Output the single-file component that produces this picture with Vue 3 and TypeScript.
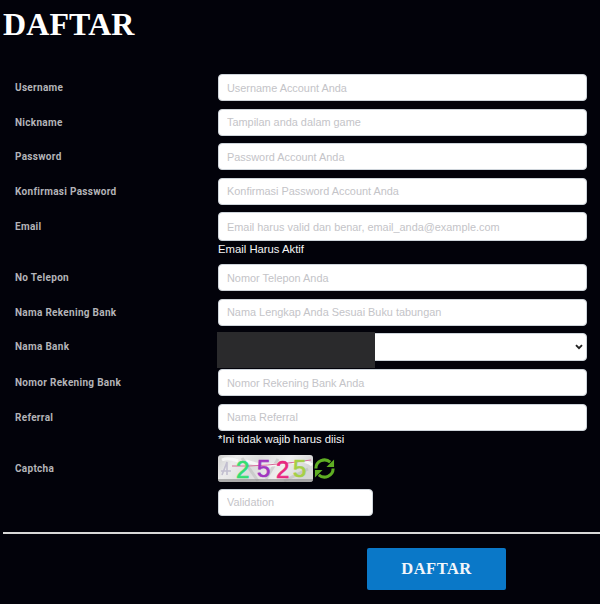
<script setup lang="ts">
interface Row { label: string; ph: string; note?: string }
const rowsA: Row[] = [
  { label: 'Username', ph: 'Username Account Anda' },
  { label: 'Nickname', ph: 'Tampilan anda dalam game' },
  { label: 'Password', ph: 'Password Account Anda' },
  { label: 'Konfirmasi Password', ph: 'Konfirmasi Password Account Anda' },
  { label: 'Email', ph: 'Email harus valid dan benar, email_anda@example.com', note: 'Email Harus Aktif' },
  { label: 'No Telepon', ph: 'Nomor Telepon Anda' },
  { label: 'Nama Rekening Bank', ph: 'Nama Lengkap Anda Sesuai Buku tabungan' },
]
const rowsB: Row[] = [
  { label: 'Nomor Rekening Bank', ph: 'Nomor Rekening Bank Anda' },
  { label: 'Referral', ph: 'Nama Referral', note: '*Ini tidak wajib harus diisi' },
]
</script>

<template>
  <main class="page">
    <h1 class="title">DAFTAR</h1>
    <form class="form" @submit.prevent>
      <div v-for="r in rowsA" :key="r.label" class="row" :class="{ noted: r.note, email: r.label === 'Email' }">
        <label class="label">{{ r.label }}</label>
        <div class="field">
          <input class="input" type="text" :placeholder="r.ph" />
          <p v-if="r.note" class="note">{{ r.note }}</p>
        </div>
      </div>
      <div class="row bank-row">
        <label class="label">Nama Bank</label>
        <div class="field bank">
          <select class="input select"><option></option></select>
          <svg class="chevron" width="8" height="6" viewBox="0 0 8 6" fill="none">
            <path d="M1 1.2l3 3 3-3" stroke="#222" stroke-width="1.9" />
          </svg>
          <div class="redact"></div>
        </div>
      </div>
      <div v-for="r in rowsB" :key="r.label" class="row" :class="{ noted: r.note }">
        <label class="label">{{ r.label }}</label>
        <div class="field">
          <input class="input" type="text" :placeholder="r.ph" />
          <p v-if="r.note" class="note">{{ r.note }}</p>
        </div>
      </div>
      <div class="row captcha-row">
        <label class="label">Captcha</label>
        <div class="field">
          <div class="captcha-line">
            <svg class="captcha" width="95" height="27" viewBox="0 0 95 27">
              <defs>
                <linearGradient id="cg" x1="0" y1="0" x2="1" y2="0.2">
                  <stop offset="0" stop-color="#cfcfcf" />
                  <stop offset="0.2" stop-color="#ececec" />
                  <stop offset="0.45" stop-color="#dcdcdc" />
                  <stop offset="0.75" stop-color="#efefef" />
                  <stop offset="1" stop-color="#d6d6d6" />
                </linearGradient>
                <clipPath id="cc"><rect width="95" height="27" rx="3" /></clipPath>
              </defs>
              <g clip-path="url(#cc)">
                <rect width="95" height="27" fill="url(#cg)" />
                <path d="M24 3 L40 26 M48 24 L60 4 M66 26 L90 14" stroke="#a5a5a5" stroke-width="3" fill="none" opacity=".35" />
                <path d="M4 20 L9 7 L9 20 M3 16 H13" stroke="#c2bfd0" stroke-width="1.6" fill="none" />
                <path d="M28 6 Q50 14 70 7 M4 5 Q10 2 20 6 M74 8 Q85 3 94 10" stroke="#fafafa" stroke-width="3" fill="none" opacity=".9" />
                <rect y="24" width="95" height="3" fill="#8e8e8e" opacity=".65" />
                <path d="M14 11 Q45 12 93 5" stroke="#d76a9a" stroke-width="1" fill="none" />
                <text x="18" y="23" class="d" fill="#35dd72" stroke="#35dd72">2</text>
                <text x="39" y="22" class="d" fill="#a035c0" stroke="#a035c0">5</text>
                <text x="58" y="23" class="d" fill="#e8277f" stroke="#e8277f">2</text>
                <text x="75" y="22" class="d" fill="#a5d045" stroke="#a5d045">5</text>
              </g>
            </svg>
            <svg class="refresh" width="23" height="23" viewBox="0 0 24 24" fill="none">
              <path d="M3 12a9 9 0 0 1 15-6.6" stroke="#5fae23" stroke-width="3.2" />
              <path d="M22 2.5v8h-8z" fill="#5fae23" />
              <path d="M21 12a9 9 0 0 1-15 6.6" stroke="#5fae23" stroke-width="3.2" />
              <path d="M2 21.5v-8h8z" fill="#5fae23" />
            </svg>
          </div>
          <input class="input validation" type="text" placeholder="Validation" />
        </div>
      </div>
      <hr class="rule" />
      <div class="actions">
        <button class="submit" type="submit">DAFTAR</button>
      </div>
    </form>
  </main>
</template>

<style>
html, body { margin: 0; background: #02020a; }
</style>

<style scoped>
.page {
  width: 600px;
  height: 604px;
  box-sizing: border-box;
  overflow: hidden;
  background: #02020a;
  padding-top: 7px;
}
.title {
  margin: 0 0 0 3px;
  font: 700 32px/35px "Liberation Serif", serif;
  color: #fff;
  letter-spacing: 0.1px;
}
.form { margin-top: 32px; }
.row {
  display: grid;
  grid-template-columns: 218px 369px;
  margin-bottom: 7.5px;
}
.row.noted { margin-bottom: 8px; }
.row.bank-row { margin-bottom: 8px; }
.label {
  padding: 7px 0 0 15px;
  font: 700 10px/14px Roboto, sans-serif;
  color: #b4b4b8;
  letter-spacing: 0.3px;
}
.email .label { padding-top: 7.5px; }
.field { display: flex; flex-direction: column; }
.input {
  display: block;
  box-sizing: border-box;
  width: 100%;
  height: 27px;
  margin: 0;
  padding: 0 8px;
  border: 1px solid #ced4da;
  border-radius: 4px;
  background: #fff;
  font: 400 10.9px "Liberation Sans", sans-serif;
  color: #333;
  outline: none;
}
.email .input { height: 29px; }
.input::placeholder { color: #c4c4c8; opacity: 1; }
.note {
  margin: 1px 0 0;
  font: 400 11.3px/14px "Liberation Sans", sans-serif;
  color: #f4f4f4;
}
.bank { position: relative; }
.select { height: 28px; appearance: none; }
.chevron {
  position: absolute;
  right: 4px;
  top: 11px;
  pointer-events: none;
}
.redact {
  position: absolute;
  left: -1px;
  top: -1px;
  width: 158px;
  height: 36px;
  background: #2a2a2c;
}
.captcha-row { margin-top: 9px; margin-bottom: 0; }
.captcha-line { display: flex; align-items: center; gap: 0; }
.captcha { display: block; }
.d {
  font: 400 24px "Liberation Sans", sans-serif;
  stroke-width: 0.7px;
}
.validation { width: 155px; margin-top: 7px; }
.rule {
  margin: 16px 0 0 3px;
  width: 597px;
  height: 2px;
  border: 0;
  background: #d8d8d8;
}
.actions { display: flex; padding: 14px 0 0 367px; }
.submit {
  width: 139px;
  height: 42px;
  border: 0;
  border-radius: 2px;
  background: #0a78c8;
  color: #f2f6fa;
  font: 700 16.5px "Liberation Serif", serif;
  letter-spacing: 0.5px;
  cursor: pointer;
}
</style>
